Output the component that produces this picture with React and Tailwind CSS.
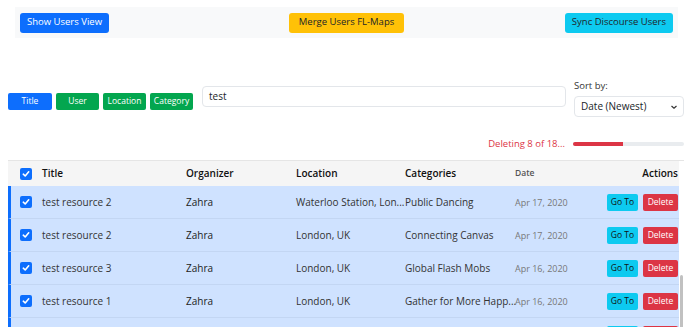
import React from "react";

const rows = [
  { title: "test resource 2", org: "Zahra", loc: "Waterloo Station, Lon...", cat: "Public Dancing", date: "Apr 17, 2020" },
  { title: "test resource 2", org: "Zahra", loc: "London, UK", cat: "Connecting Canvas", date: "Apr 17, 2020" },
  { title: "test resource 3", org: "Zahra", loc: "London, UK", cat: "Global Flash Mobs", date: "Apr 16, 2020" },
  { title: "test resource 1", org: "Zahra", loc: "London, UK", cat: "Gather for More Happ...", date: "Apr 16, 2020" },
];

function Check() {
  return (
    <div className="w-[12px] h-[12px] rounded-[2px] bg-[#0d6efd] flex items-center justify-center">
      <svg width="8" height="8" viewBox="0 0 8 8">
        <path d="M1.3 4.2 L3.2 6 L6.7 1.8" fill="none" stroke="white" strokeWidth="1.6" strokeLinecap="round" strokeLinejoin="round" />
      </svg>
    </div>
  );
}

const headGrid = "grid grid-cols-[34px_144px_110px_109px_110px_1fr_auto] items-center";
const rowGrid = "grid grid-cols-[31px_144px_110px_109px_110px_1fr_auto] items-center";

export default function App() {
  return (
    <div className="w-[690px] h-[327px] overflow-hidden bg-white font-['Open_Sans',sans-serif] text-[#212529]">
      {/* top bar */}
      <div className="mt-[7px] ml-[15px] mr-[12px] h-[31px] bg-[#f8f9fa] grid grid-cols-3 items-center px-[5px]">
        <div className="justify-self-start h-[20px] px-[7px] rounded-[3px] bg-[#0d6efd] text-white text-[9.5px] flex items-center">Show Users View</div>
        <div className="justify-self-center h-[20px] px-[10px] rounded-[3px] bg-[#ffc107] text-[#212529] text-[9.5px] flex items-center">Merge Users FL-Maps</div>
        <div className="justify-self-end h-[20px] px-[7px] rounded-[3px] bg-[#0dcaf0] text-[#212529] text-[9.5px] flex items-center">Sync Discourse Users</div>
      </div>

      {/* filter row */}
      <div className="mt-[41px] ml-[8px] mr-[6px] flex items-start">
        <div className="mt-[14px] flex gap-[4px]">
          <div className="w-[44px] h-[17px] rounded-[2px] bg-[#0d6efd] text-white text-[8.5px] flex items-center justify-center">Title</div>
          <div className="w-[43px] h-[17px] rounded-[2px] bg-[#03a64f] text-white text-[8.5px] flex items-center justify-center">User</div>
          <div className="w-[43px] h-[17px] rounded-[2px] bg-[#03a64f] text-white text-[8.5px] flex items-center justify-center">Location</div>
          <div className="w-[43px] h-[17px] rounded-[2px] bg-[#03a64f] text-white text-[8.5px] flex items-center justify-center">Category</div>
        </div>
        <div className="mt-[7px] ml-[9px] w-[364px] h-[21px] border border-[#e3e6ea] rounded-[4px] px-[6px] text-[10px] flex items-center">test</div>
        <div className="ml-[8px] flex-1 flex flex-col">
          <div className="text-[9.5px] leading-[13px] text-[#333]">Sort by:</div>
          <div className="mt-[4px] h-[21px] border border-[#e3e6ea] rounded-[4px] pl-[6px] pr-[5px] text-[10px] flex items-center justify-between">
            <span>Date (Newest)</span>
            <svg width="8" height="8" viewBox="0 0 8 8"><path d="M1.5 3 L4 5.3 L6.5 3" fill="none" stroke="#333" strokeWidth="1.2" /></svg>
          </div>
        </div>
      </div>

      {/* deleting */}
      <div className="mt-[20px] mr-[6px] flex justify-end items-center gap-[8px]">
        <span className="text-[9.5px] text-[#dc3545]">Deleting 8 of 18...</span>
        <div className="w-[111px] h-[4px] rounded-full bg-[#e9ecef] overflow-hidden">
          <div className="w-[50px] h-full bg-[#dc3545]"></div>
        </div>
      </div>

      {/* table */}
      <div className="mt-[9px] ml-[8px] mr-[6px] flex border-t border-[#e5e5e5]">
        <div className="flex-1">
          <div className={`${headGrid} h-[25px] bg-[#f5f5f5] text-[10px] font-semibold text-[#111]`}>
            <div className="pl-[12px]"><Check /></div>
            <div>Title</div>
            <div>Organizer</div>
            <div>Location</div>
            <div>Categories</div>
            <div className="text-[8.5px] text-[#555]">Date</div>
            <div className="pr-[1px] text-right">Actions</div>
          </div>
          {rows.map((r, i) => (
            <div key={i} className={`${rowGrid} h-[33px] bg-[#cfe2ff] border-l-[3px] border-[#0d6efd] border-b border-b-[#c3d6f3] text-[10px]`}>
              <div className="pl-[9px]"><Check /></div>
              <div className="text-[#333]">{r.title}</div>
              <div className="font-medium text-[#222]">{r.org}</div>
              <div className="text-[#333] whitespace-nowrap">{r.loc}</div>
              <div className="text-[#333] whitespace-nowrap">{r.cat}</div>
              <div className="text-[9px] text-[#777]">{r.date}</div>
              <div className="flex gap-[5px] pr-[1px]">
                <div className="w-[31px] h-[17px] rounded-[2px] bg-[#0dcaf0] text-[#111] text-[8.5px] flex items-center justify-center">Go To</div>
                <div className="w-[35px] h-[17px] rounded-[2px] bg-[#dc3545] text-white text-[8.5px] flex items-center justify-center">Delete</div>
              </div>
            </div>
          ))}
          <div className={`${rowGrid} h-[33px] bg-[#cfe2ff] border-l-[3px] border-[#0d6efd]`}>
            <div></div><div></div><div></div><div></div><div></div><div></div>
            <div className="flex gap-[5px] pr-[1px] self-start mt-[8px]">
              <div className="w-[31px] h-[17px] rounded-[2px] bg-[#0dcaf0]"></div>
              <div className="w-[35px] h-[17px] rounded-[2px] bg-[#dc3545]"></div>
            </div>
          </div>
        </div>
        <div className="w-[5px] flex flex-col">
          <div className="mt-[114px] ml-[1px] w-[3px] h-[60px] rounded-full bg-[#c1c1c1]"></div>
        </div>
      </div>
    </div>
  );
}
